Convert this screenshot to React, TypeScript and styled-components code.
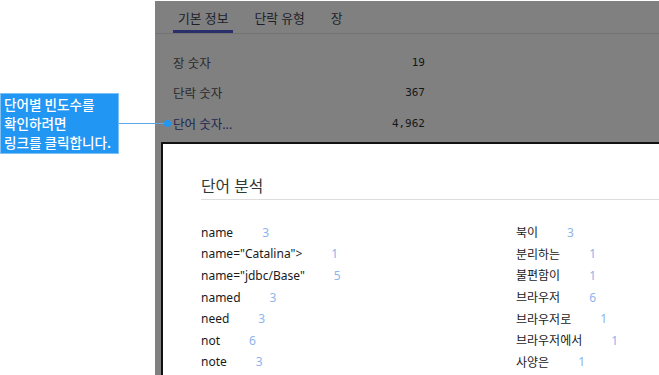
import styled, { createGlobalStyle } from 'styled-components';

const GlobalStyle = createGlobalStyle`
  html, body {
    margin: 0;
    padding: 0;
    background: #ffffff;
    overflow: hidden;
  }
  body {
    font-family: "Noto Sans", "Noto Sans CJK KR", sans-serif;
  }
`;

const Page = styled.div`
  position: relative;
  display: flex;
  height: 375px;
  width: 659px;
  overflow: hidden;
`;

const Gutter = styled.div`
  width: 155px;
  flex-shrink: 0;
`;

const Panel = styled.div`
  flex: 1;
  margin-top: 1px;
  background: #808080;
  display: flex;
  flex-direction: column;
  overflow: hidden;
`;

const TabBar = styled.div`
  display: flex;
  gap: 16px;
  padding-left: 18px;
  border-bottom: 1px solid #737373;
`;

const Tab = styled.div<{ $active?: boolean }>`
  padding: 8px 5px 3px;
  line-height: 18px;
  font-size: 12.8px;
  color: #1e1e2a;
  border-bottom: 3px solid ${(p) => (p.$active ? '#2a2f6c' : 'transparent')};
`;

const Stats = styled.div`
  padding: 13px 0 0 18px;
  width: 252px;
`;

const StatRow = styled.div`
  display: flex;
  justify-content: space-between;
  align-items: center;
  height: 30.5px;
  font-size: 12.5px;
`;

const StatLabel = styled.span<{ $link?: boolean }>`
  color: ${(p) => (p.$link ? '#1d2550' : '#2a2a2a')};
`;

const StatValue = styled.span`
  font-family: "DejaVu Sans Mono", "Liberation Mono", monospace;
  font-size: 11px;
  color: #161616;
`;

const Dialog = styled.div`
  flex: 1;
  margin: 3px 0 0 6px;
  background: #ffffff;
  border-top: 2px solid #111;
  border-left: 2px solid #111;
  padding: 31px 0 0 38px;
`;

const Title = styled.div`
  font-size: 15.8px;
  line-height: 22px;
  color: #2d3a3a;
  padding-bottom: 2px;
  border-bottom: 1px solid #dddddd;
  margin-bottom: 22px;
`;

const WordGrid = styled.div`
  display: grid;
  grid-template-columns: 315px 315px;
`;

const WordColumn = styled.div`
  display: flex;
  flex-direction: column;
`;

const WordRow = styled.div`
  display: flex;
  align-items: center;
  height: 21.6px;
  font-size: 12px;
  color: #1a1a1a;
  white-space: nowrap;
`;

const Count = styled.span`
  margin-left: 29px;
  color: #8db4ee;
`;

const Annotation = styled.div`
  position: absolute;
  left: 0;
  top: 93px;
  display: flex;
  align-items: center;
`;

const Callout = styled.div`
  width: 111px;
  padding: 1px 3px;
  background: #2196f3;
  border: 1px solid #7cc0f6;
  color: #ffffff;
  font-size: 13.6px;
  line-height: 19px;
  font-weight: 500;
  white-space: nowrap;
  font-family: "Noto Sans CJK KR", sans-serif;
`;

const Connector = styled.div`
  width: 45px;
  height: 1px;
  background: #5fa6e6;
`;

const Dot = styled.div`
  width: 7px;
  height: 7px;
  border-radius: 50%;
  background: #2196f3;
`;

const left = [
  ['name', 3],
  ['name="Catalina">', 1],
  ['name="jdbc/Base"', 5],
  ['named', 3],
  ['need', 3],
  ['not', 6],
  ['note', 3],
];

const right = [
  ['북이', 3],
  ['분리하는', 1],
  ['불편함이', 1],
  ['브라우저', 6],
  ['브라우저로', 1],
  ['브라우저에서', 1],
  ['사양은', 1],
];

export default function App() {
  return (
    <>
      <GlobalStyle />
      <Page>
        <Gutter />
        <Panel>
          <TabBar>
            <Tab $active>기본 정보</Tab>
            <Tab>단락 유형</Tab>
            <Tab>장</Tab>
          </TabBar>
          <Stats>
            <StatRow>
              <StatLabel>장 숫자</StatLabel>
              <StatValue>19</StatValue>
            </StatRow>
            <StatRow>
              <StatLabel>단락 숫자</StatLabel>
              <StatValue>367</StatValue>
            </StatRow>
            <StatRow>
              <StatLabel $link>단어 숫자...</StatLabel>
              <StatValue>4,962</StatValue>
            </StatRow>
          </Stats>
          <Dialog>
            <Title>단어 분석</Title>
            <WordGrid>
              <WordColumn>
                {left.map(([w, c]) => (
                  <WordRow key={w}>
                    {w}
                    <Count>{c}</Count>
                  </WordRow>
                ))}
              </WordColumn>
              <WordColumn>
                {right.map(([w, c]) => (
                  <WordRow key={w}>
                    {w}
                    <Count>{c}</Count>
                  </WordRow>
                ))}
              </WordColumn>
            </WordGrid>
          </Dialog>
        </Panel>
        <Annotation>
          <Callout>
            단어별 빈도수를
            <br />
            확인하려면
            <br />
            링크를 클릭합니다.
          </Callout>
          <Connector />
          <Dot />
        </Annotation>
      </Page>
    </>
  );
}
